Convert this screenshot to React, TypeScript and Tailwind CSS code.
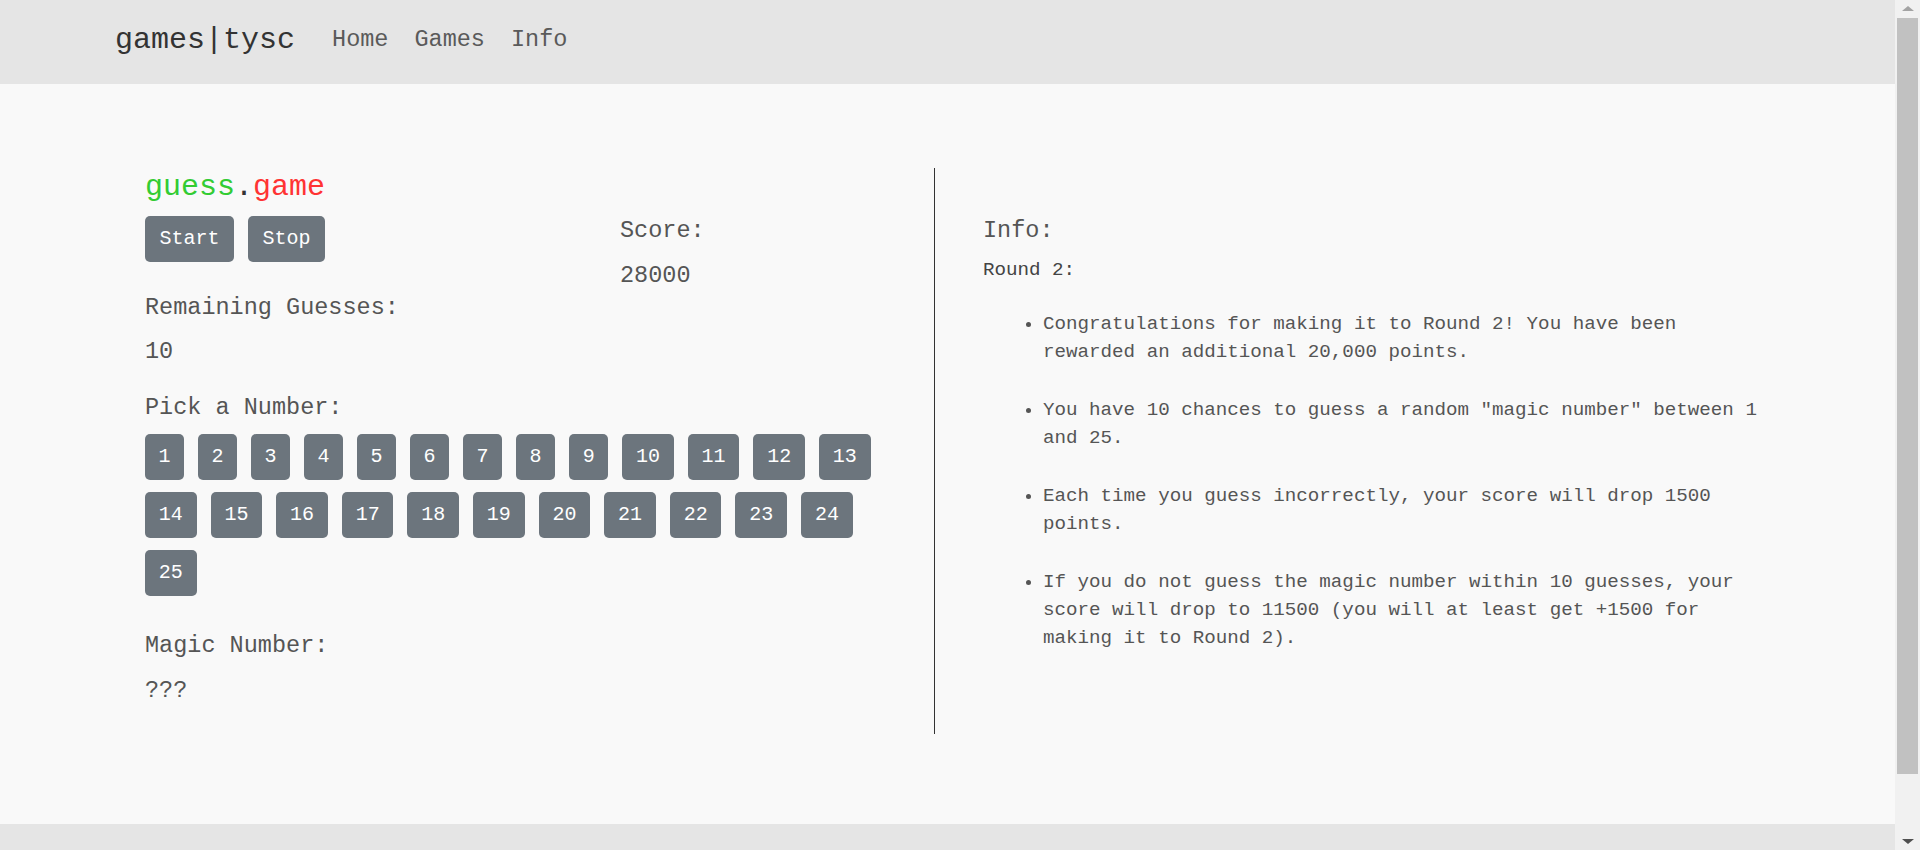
const numbers = Array.from({ length: 25 }, (_, i) => i + 1);

const infoItems = [
    "Congratulations for making it to Round 2! You have been rewarded an additional 20,000 points.",
    'You have 10 chances to guess a random "magic number" between 1 and 25.',
    "Each time you guess incorrectly, your score will drop 1500 points.",
    "If you do not guess the magic number within 10 guesses, your score will drop to 11500 (you will at least get +1500 for making it to Round 2).",
];

const App = () => {
    return (
        <div className="min-h-screen bg-[#f9f9f9] font-['Liberation_Mono','Courier_New',monospace] text-[#555]">
            {/* Navbar */}
            <nav className="h-[84px] bg-[#e5e5e5] pt-[22px]">
                <div className="ml-[115px] flex items-center h-[36px]">
                    <span className="text-[30px] leading-[36px] text-[#333] mr-[24px]">games|tysc</span>
                    {["Home", "Games", "Info"].map((link) => (
                        <a key={link} href="#" className="px-[13px] text-[23.5px] leading-[28px] text-[#5a5a5a]">
                            {link}
                        </a>
                    ))}
                </div>
            </nav>

            <main className="pt-[84px] pb-[90px]">
                <div className="ml-[145px] w-[1623px] flex">
                    {/* Game column */}
                    <div className="w-[789px] pr-[29px] pb-[29px]">
                        <h2 className="pt-[2px] text-[30px] leading-[35px]">
                            <span className="text-[#33cc33]">guess</span>
                            <span className="text-[#333]">.</span>
                            <span className="text-[#ff3333]">game</span>
                        </h2>

                        <div className="mt-[11px] flex">
                            <div className="w-[475px]">
                                <div className="flex gap-[14px]">
                                    {["Start", "Stop"].map((label) => (
                                        <button
                                            key={label}
                                            className="bg-[#6c757d] text-white text-[20px] leading-[24px] py-[11px] px-[14.5px] rounded-[5px]"
                                        >
                                            {label}
                                        </button>
                                    ))}
                                </div>
                                <h5 className="mt-[32px] text-[23.5px] leading-[28px]">Remaining Guesses:</h5>
                                <p className="mt-[16px] text-[23.5px] leading-[28px]">10</p>
                            </div>
                            <div className="pt-[1px]">
                                <h5 className="text-[23.5px] leading-[28px]">Score:</h5>
                                <p className="mt-[17px] text-[23.5px] leading-[28px]">28000</p>
                            </div>
                        </div>

                        <h5 className="mt-[28px] text-[23.5px] leading-[28px]">Pick a Number:</h5>
                        <div className="mt-[12px] flex flex-wrap gap-x-[14px] gap-y-[12px]">
                            {numbers.map((n) => (
                                <button
                                    key={n}
                                    className={
                                        n < 10
                                            ? "bg-[#6c757d] text-white text-[20px] leading-[24px] py-[11px] px-[13.5px] rounded-[5px]"
                                            : "bg-[#6c757d] text-white text-[20px] leading-[24px] py-[11px] px-[13.8px] rounded-[5px]"
                                    }
                                >
                                    {n}
                                </button>
                            ))}
                        </div>

                        <h5 className="mt-[36px] text-[23.5px] leading-[28px]">Magic Number:</h5>
                        <p className="mt-[17px] text-[23.5px] leading-[28px]">???</p>
                    </div>

                    {/* Info column */}
                    <div className="flex-1 border-l border-[#333] pl-[48px] pt-[49px]">
                        <h5 className="text-[23.5px] leading-[28px]">Info:</h5>
                        <p className="mt-[11px] text-[19.2px] leading-[28px] text-[#444]">Round 2:</p>
                        <ul className="mt-[26px] pl-[60px] list-disc">
                            {infoItems.map((item, index) => (
                                <li key={index} className="mb-[30px] text-[19.2px] leading-[28px]">
                                    {item}
                                </li>
                            ))}
                        </ul>
                    </div>
                </div>
            </main>

            <footer className="h-[93px] bg-[#e5e5e5]" />

            {/* Scrollbar */}
            <div className="fixed top-0 right-0 h-screen w-[25px] bg-[#f1f1f1]">
                <div className="mx-auto mt-[6px] w-0 h-0 border-x-[6px] border-x-transparent border-b-[5px] border-b-[#a3a3a3]" />
                <div className="absolute top-[18px] left-[2px] right-[2px] h-[756px] bg-[#c1c1c1]" />
                <div className="absolute bottom-[6px] left-1/2 -translate-x-1/2 w-0 h-0 border-x-[6px] border-x-transparent border-t-[5px] border-t-[#505050]" />
            </div>
        </div>
    );
};

export default App;
